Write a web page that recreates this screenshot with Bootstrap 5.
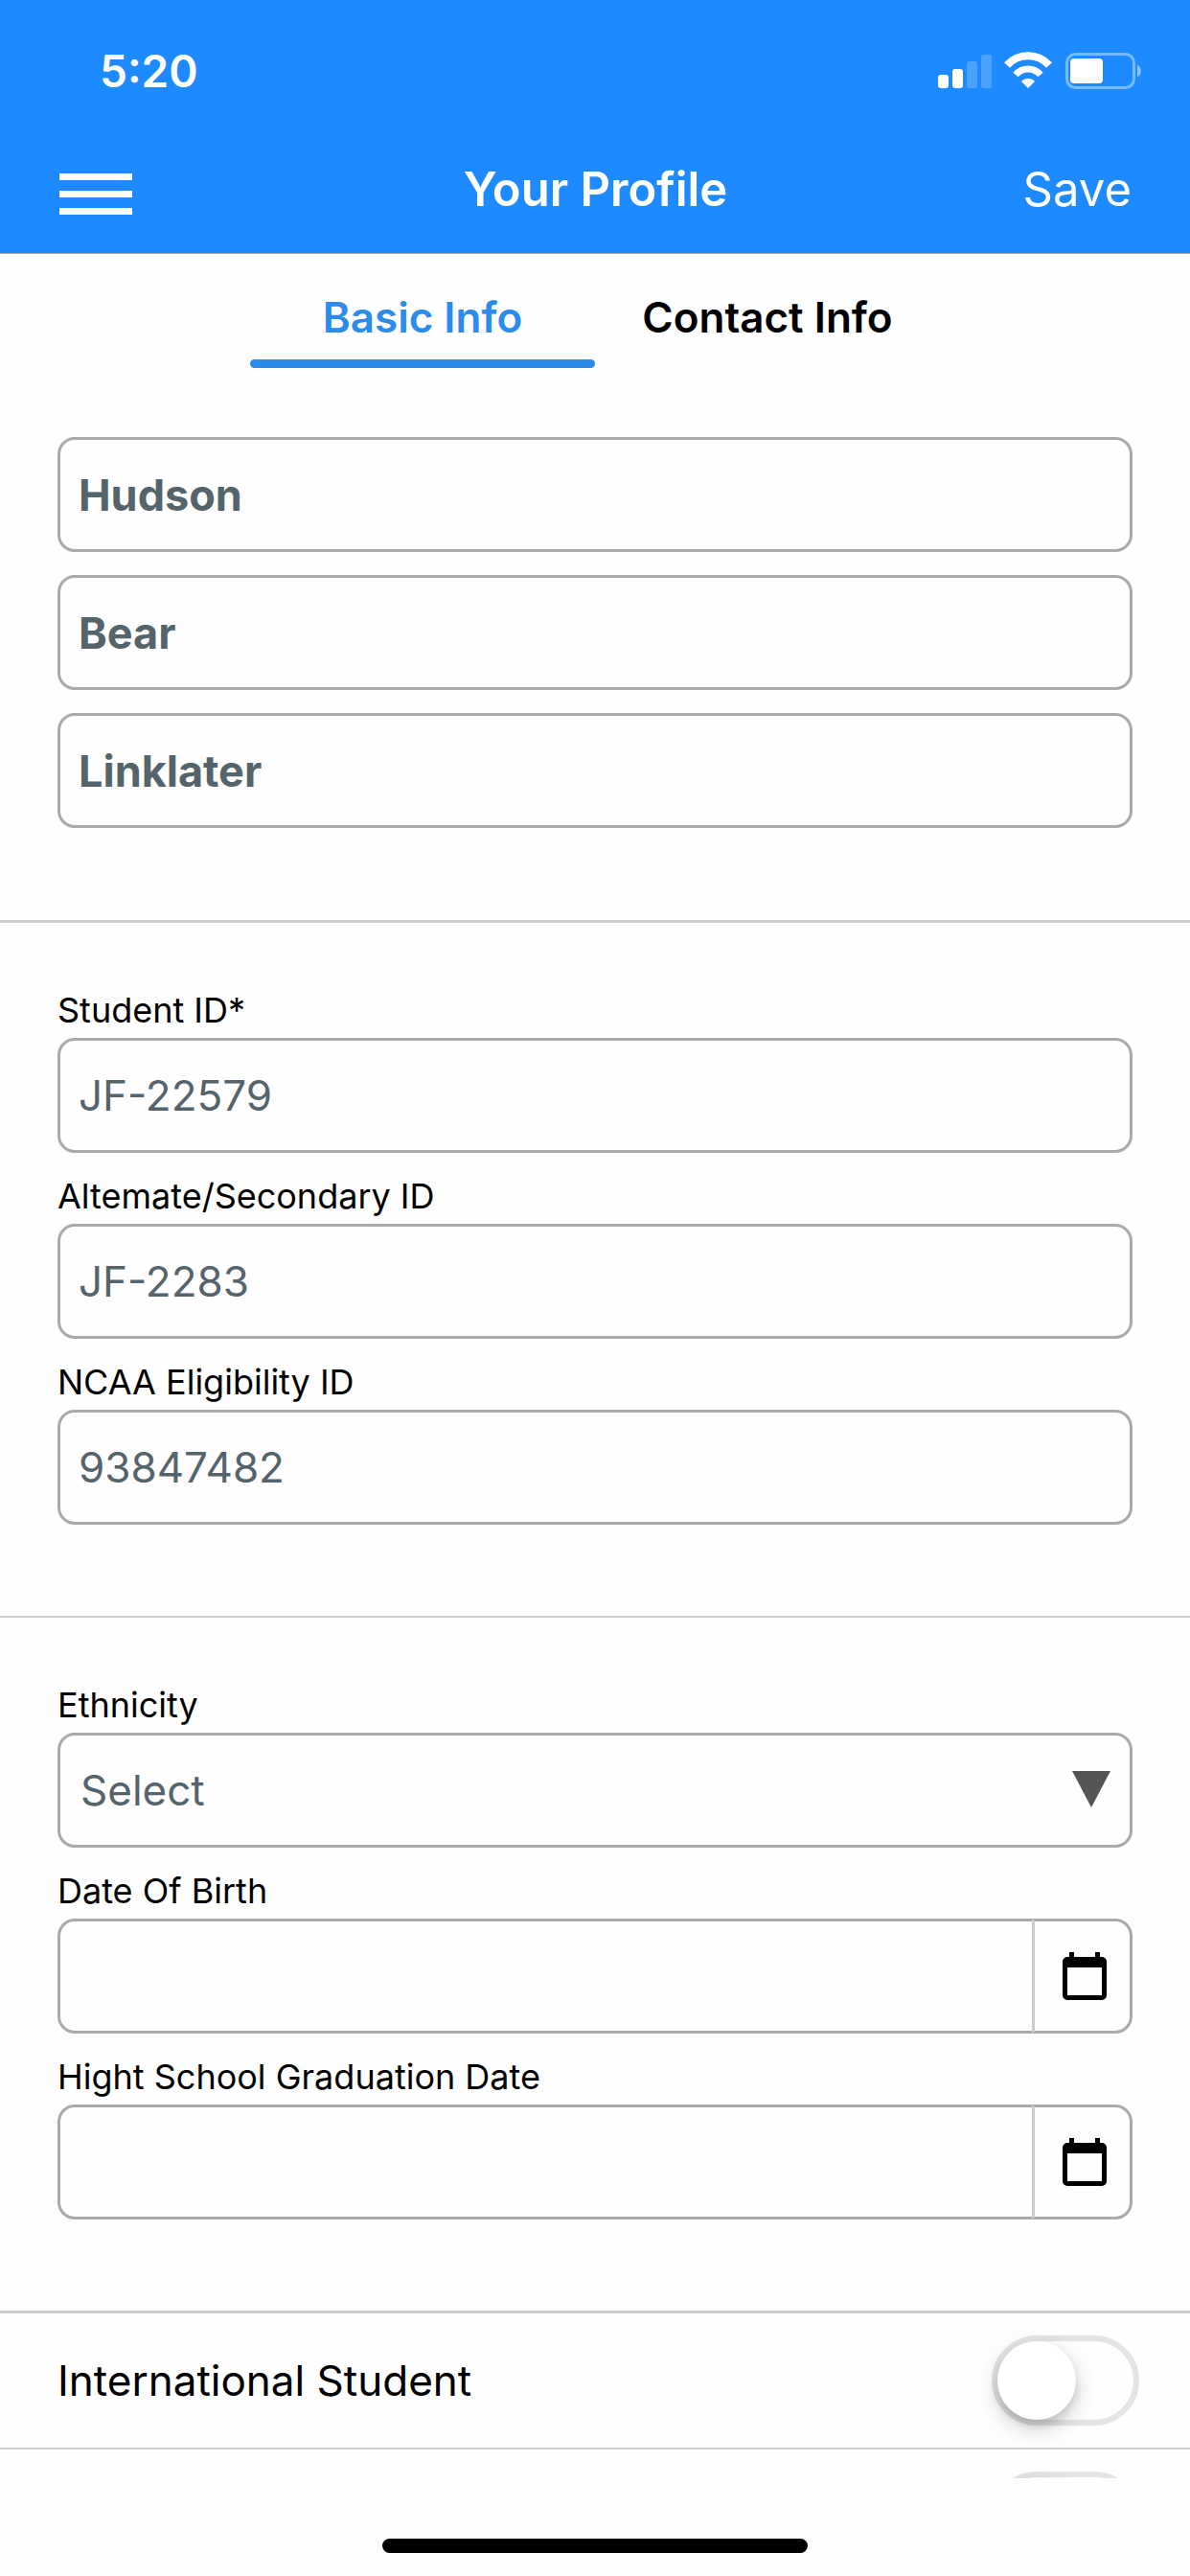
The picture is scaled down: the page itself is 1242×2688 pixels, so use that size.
<!DOCTYPE html>
<html lang="en">
<head>
<meta charset="utf-8">
<meta name="viewport" content="width=device-width, initial-scale=1">
<title>Your Profile</title>
<link href="https://cdn.jsdelivr.net/npm/bootstrap@5.3.0/dist/css/bootstrap.min.css" rel="stylesheet">
<style>
  body { font-family: Inter, "Liberation Sans", sans-serif; background: #fefefe; color: #000; }
  .app-head { background: #1e8aff; border-bottom: 1px solid #aaa; }
  .status-bar { padding: 40px 50px 0 104px; }
  .clock { font-size: 46px; line-height: 68px; font-weight: 600; }
  .title-bar { display: grid; grid-template-columns: 1fr auto 1fr; padding: 56px 61px 32px 62px; }
  .title-bar h1, .save-link { font-size: 49px; line-height: 68px; }
  .title-bar h1 { font-weight: 600; }
  .menu-btn { gap: 11px; width: 76px; margin-top: 8px; }
  .menu-btn span { height: 7px; background: #fff; }
  .tab-btn { width: 360px; height: 119px; padding: 32px 0 0; border: 0; background: none; font-size: 44px; line-height: 68px; font-weight: 600; }
  .tab-btn::after { content: ""; width: 100%; height: 9px; border-radius: 5px; }
  .tab-btn.active { color: #2b8cec; }
  .tab-btn.active::after { background: #2b8aea; }
  .block { padding: 72px 60px 96px; border-bottom: 3px solid #ccc; }
  .names { gap: 24px; }
  .ids { border-bottom-width: 2px; }
  .fields { gap: 26px; padding-bottom: 95px; }
  .fields .form-label { font-size: 36px; line-height: 38px; margin: 0 0 10px; }
  .field-box, .field-box:focus { height: 120px; border: 3px solid #aaa; border-radius: 18px; padding: 0 19px; font-size: 44px; color: #55646b; background-color: #fefefe; }
  .names .field-box { font-size: 45px; font-weight: 700; }
  select.field-box { padding: 0 80px 0 21px; background-size: 40px 38px; background-position: right 20px top 37px;
    background-image: url("data:image/svg+xml,%3Csvg xmlns='http://www.w3.org/2000/svg' viewBox='0 0 40 38'%3E%3Cpath fill='%23555' d='M0 0h40L20 38z'/%3E%3C/svg%3E"); }
  .cal-btn, .cal-btn:hover { border: 3px solid #aaa; border-left-color: #ccc; border-radius: 18px; width: 105px; padding: 0 0 0 4px; background: #fefefe; }
  .cal-btn svg { width: 46px; height: 50px; }
  .switch-row { height: 142px; padding: 0 53px 0 60px; border-bottom: 2px solid #d0d0d0; font-size: 44px; }
  .switch-row .form-check-input { width: 154px; height: 94px; margin: 0; float: none; border: 6px solid #e4e4e4; border-radius: 47px; background: #fefefe none; }
  .switch-row .form-check-input::before { content: ""; display: block; width: 82px; height: 82px; border-radius: 50%; background: #fff; box-shadow: 0 9px 24px rgba(0,0,0,.18), 0 6px 10px rgba(0,0,0,.12); }
  .switch-row .form-check-input:checked { background-color: #2b8aea; }
  .home-area { height: 102px; padding-top: 63px; }
  .home-bar { width: 444px; height: 15px; background: #000; border-radius: 8px; }
</style>
</head>
<body>
<div class="d-flex flex-column vh-100 overflow-hidden">
  <header class="app-head text-white flex-shrink-0">
    <div class="status-bar d-flex justify-content-between align-items-center">
      <span class="clock">5:20</span>
      <svg width="214" height="40" viewBox="0 0 214 40" fill="#fff" aria-label="Signal, Wi-Fi and battery">
        <rect x="1" y="24" width="11" height="14" rx="3"/>
        <rect x="16" y="18" width="11" height="20" rx="3"/>
        <rect x="31" y="10" width="11" height="28" rx="3" opacity=".2"/>
        <rect x="46" y="3" width="11" height="35" rx="3" opacity=".2"/>
        <path d="M95 28c4 0 6 2 7 3l-7 7-7-7c1-1 3-3 7-3z"/>
        <g fill="none" stroke="#fff" stroke-width="7"><path d="M82 24c7-8 19-8 26 0"/><path d="M73 14c12-13 32-13 44 0" stroke-width="8"/></g>
        <rect x="135.500" y="2.500" width="70" height="35" rx="9" fill="none" stroke="#fff" stroke-width="3" opacity=".4"/>
        <rect x="139" y="7" width="34" height="26" rx="4"/>
        <path d="M209 14c5 1 5 11 0 12z" opacity=".5"/>
      </svg>
    </div>
    <div class="title-bar align-items-center">
      <button type="button" class="menu-btn btn p-0 border-0 rounded-0 d-flex flex-column" aria-label="Menu"><span></span><span></span><span></span></button>
      <h1 class="m-0">Your Profile</h1>
      <a href="#" class="save-link text-white text-decoration-none text-end">Save</a>
    </div>
  </header>

  <main class="flex-grow-1 overflow-hidden">
    <nav class="d-flex justify-content-center" aria-label="Profile sections">
      <button type="button" class="tab-btn active d-flex flex-column justify-content-between align-items-center" aria-current="page">Basic Info</button>
      <button type="button" class="tab-btn d-flex flex-column justify-content-between align-items-center">Contact Info</button>
    </nav>
    <form>
      <section class="block names d-flex flex-column">
        <input class="form-control field-box" type="text" aria-label="First name" value="Hudson">
        <input class="form-control field-box" type="text" aria-label="Middle name" value="Bear">
        <input class="form-control field-box" type="text" aria-label="Last name" value="Linklater">
      </section>

      <section class="block fields ids d-flex flex-column">
        <div><label class="form-label d-block" for="sid">Student ID*</label>
          <input class="form-control field-box" type="text" id="sid" value="JF-22579"></div>
        <div><label class="form-label d-block" for="alt">Altemate/Secondary ID</label>
          <input class="form-control field-box" type="text" id="alt" value="JF-2283"></div>
        <div><label class="form-label d-block" for="ncaa">NCAA Eligibility ID</label>
          <input class="form-control field-box" type="text" id="ncaa" value="93847482"></div>
      </section>

      <section class="block fields d-flex flex-column">
        <div><label class="form-label d-block" for="eth">Ethnicity</label>
          <select class="form-select field-box" id="eth"><option>Select</option></select></div>
        <div><label class="form-label d-block" for="dob">Date Of Birth</label>
          <div class="input-group">
            <input class="form-control field-box border-end-0" type="text" id="dob">
            <button type="button" class="btn cal-btn" aria-label="Pick date of birth"><svg viewBox="0 0 46 50"><path fill-rule="evenodd" d="M7 0h5v5h22V0h5v5h2a5 5 0 0 1 5 5v35a5 5 0 0 1-5 5H5a5 5 0 0 1-5-5V10a5 5 0 0 1 5-5h2zM5 16v29h36V16z"/></svg></button>
          </div></div>
        <div><label class="form-label d-block" for="grad">Hight School Graduation Date</label>
          <div class="input-group">
            <input class="form-control field-box border-end-0" type="text" id="grad">
            <button type="button" class="btn cal-btn" aria-label="Pick graduation date"><svg viewBox="0 0 46 50"><path fill-rule="evenodd" d="M7 0h5v5h22V0h5v5h2a5 5 0 0 1 5 5v35a5 5 0 0 1-5 5H5a5 5 0 0 1-5-5V10a5 5 0 0 1 5-5h2zM5 16v29h36V16z"/></svg></button>
          </div></div>
      </section>

      <div class="switch-row form-switch d-flex justify-content-between align-items-center">
        <label for="intl">International Student</label>
        <input class="form-check-input" type="checkbox" role="switch" id="intl">
      </div>
      <div class="switch-row form-switch d-flex justify-content-end align-items-center">
        <input class="form-check-input" type="checkbox" role="switch" aria-label="Next option">
      </div>
    </form>
  </main>

  <footer class="home-area flex-shrink-0"><div class="home-bar mx-auto"></div></footer>
</div>
<script src="https://cdn.jsdelivr.net/npm/bootstrap@5.3.0/dist/js/bootstrap.bundle.min.js"></script>
</body>
</html>
